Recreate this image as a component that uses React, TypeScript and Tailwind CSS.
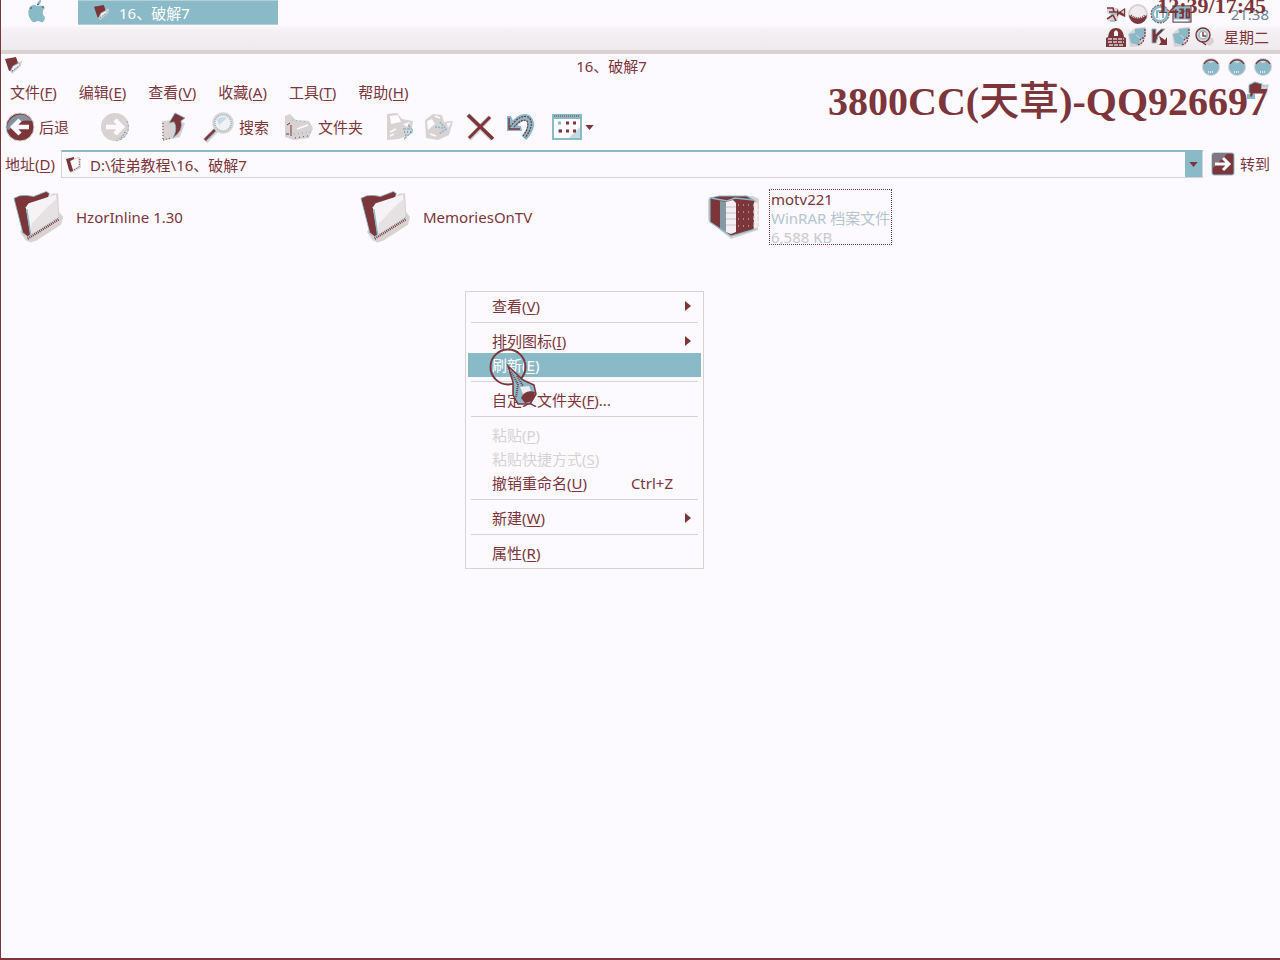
import React from "react";

const INK = "#7b353b";
const TEAL = "#8ab9c8";
const ASH = "#d8d2d2";
const PAPER = "#fcfaff";

function FolderIcon({ size }: { size: string }) {
  return (
    <svg viewBox="0 0 52 54" className={size} aria-hidden="true">
      <path d="M7 42 L13 51 L18 53 L24 51 L49 35 L51 27 L47 22 L46 3 L40 3 Z" fill={ASH} />
      <path d="M1 8 Q7 4 14 5 L21 6 L34 1 L37 3 L36 7 L18 14 L15 18 L19 44 L15 47 L10 43 Z" fill={INK} stroke={TEAL} strokeWidth="0.8" />
      <path d="M13 17 L16 13 L44 4 L46 28 L18 46 Z" fill="#f6f3f6" />
      <path d="M34 18 L45 8 L46 28 L18 46 L19 34 Z" fill="#e6e1e3" />
      <path d="M14 19 L18 45" stroke={TEAL} strokeWidth="1.5" />
      <path d="M15 49 L47 29" stroke={INK} strokeWidth="2.6" strokeDasharray="1 1" />
      <path d="M16 47 L47 27" stroke={TEAL} strokeWidth="1" strokeDasharray="1 1" />
    </svg>
  );
}

function SmallFolder({ size }: { size: string }) {
  return (
    <svg viewBox="0 0 18 18" className={size} aria-hidden="true">
      <path d="M5 14 L7 17 L16 9 L17 4 L13 5 Z" fill={ASH} />
      <path d="M0 2 L11 0 L13 6 L7 13 L4 14 Z" fill={INK} />
      <path d="M6 13 L8 9 L14 6 L15 8 L7 15 Z" fill="#f3eff2" stroke={TEAL} strokeWidth="0.8" />
      <path d="M7 14 L14 9" stroke={INK} strokeWidth="1" strokeDasharray="1 2" />
    </svg>
  );
}

function AddressFolder() {
  return (
    <svg viewBox="0 0 18 18" className="h-[18px] w-[18px]" aria-hidden="true">
      <path d="M4 3 L15 1 L16 12 L6 17 L4 15 Z" fill={ASH} />
      <path d="M6 5 L13 2 L14 10 L7 14 Z" fill={PAPER} />
      <path d="M1 3 L9 1 L9 3 L5 5 L8 14 L6 16 L4 14 Z" fill={INK} />
      <path d="M15 3 L14 11 L7 15" fill="none" stroke={INK} strokeWidth="1" strokeDasharray="1 1.5" />
    </svg>
  );
}

function RarIcon() {
  return (
    <svg viewBox="0 0 54 46" className="h-[46px] w-[54px]" aria-hidden="true">
      <path d="M1 5 L1 26 L24 45 L51 36 L52 5 L46 2 Z" fill={ASH} />
      <path d="M3 4 L12 2 L40 2 L48 7 L48 35 L24 42 L3 28 Z" fill={INK} stroke={TEAL} strokeWidth="1.2" />
      <path d="M13 7 L20 8 L20 40 L13 35 Z" fill={TEAL} opacity="0.75" />
      <path d="M4 4 L20 7 L28 4 L46 6" fill="none" stroke={TEAL} strokeWidth="1.5" />
      <path d="M19 8 L26 6 L29 9 L29 38 L24 40 L19 38 Z" fill="#f3eff2" />
      <path d="M19 13 H29 M19 19 H29 M19 25 H29 M19 31 H29" stroke={ASH} strokeWidth="1.5" />
      <path d="M31 11 H48 M31 18 H48 M31 25 H48 M31 32 H48" stroke={ASH} strokeWidth="1" strokeDasharray="1 4" />
      <path d="M47 8 L51 9 L51 33 L47 35 Z" fill="#f3eff2" stroke={ASH} strokeDasharray="4 2" />
    </svg>
  );
}

function Apple() {
  return (
    <svg viewBox="0 0 20 24" className="h-6 w-5" aria-hidden="true">
      <path d="M10 6 C7 4 3 5 2 9 C0 14 3 20 6 22 C8 23 9 21 11 21 C13 21 14 23 16 22 C17 21 18 19 18 17 C15 15 15 10 18 8 C16 5 13 5 10 6 Z" fill={TEAL} />
      <path d="M10 5 C10 2 12 0 14 0 C14 3 13 5 10 5 Z" fill={TEAL} />
      <path d="M3 8 H5 M15 7 H17 M10 5 L12 4" stroke={INK} strokeWidth="1" />
    </svg>
  );
}

function BackIcon() {
  return (
    <svg viewBox="0 0 30 30" className="h-[30px] w-[30px]" aria-hidden="true">
      <circle cx="15" cy="15" r="14" fill={INK} stroke={ASH} />
      <path d="M2 17 A13.5 13.5 0 0 1 27 9 Q14 6 4 18 Z" fill={TEAL} opacity="0.7" />
      <path d="M24 15 H8 M15 8 L8 15 L15 22" fill="none" stroke={PAPER} strokeWidth="4.5" />
    </svg>
  );
}

function ForwardIcon() {
  return (
    <svg viewBox="0 0 30 30" className="h-[30px] w-[30px]" aria-hidden="true">
      <circle cx="15" cy="15" r="14" fill={ASH} />
      <path d="M27 9 A14 14 0 0 1 15 29" fill="none" stroke={TEAL} strokeWidth="1.2" strokeDasharray="2 2" />
      <path d="M25 20 A13 13 0 0 1 19 27" fill="none" stroke={INK} strokeDasharray="1 2" />
      <path d="M6 15 H22 M15 8 L22 15 L15 22" fill="none" stroke={PAPER} strokeWidth="4.5" />
    </svg>
  );
}

function UpIcon() {
  return (
    <svg viewBox="0 0 26 30" className="h-[30px] w-[26px]" aria-hidden="true">
      <path d="M1 9 L12 8 L24 11 L19 25 L2 29 Z" fill={ASH} />
      <path d="M2 11 V28 M2 28 L10 26" stroke={INK} strokeWidth="1" strokeDasharray="1 2" />
      <path d="M14 1 L24 6 L20 9 Q23 18 12 26 Q17 16 13 10 L8 11 Z" fill={INK} stroke={TEAL} strokeWidth="0.8" />
    </svg>
  );
}

function SearchIcon() {
  return (
    <svg viewBox="0 0 32 32" className="h-8 w-8" aria-hidden="true">
      <path d="M2 30 L14 18" stroke={ASH} strokeWidth="6" />
      <path d="M2 29 L13 18" stroke={INK} strokeWidth="3" />
      <path d="M4 29 L14 19" stroke={TEAL} strokeWidth="1.4" strokeDasharray="1 1" />
      <circle cx="20" cy="12" r="9.5" fill="#f3f1f6" stroke={ASH} strokeWidth="2.5" />
      <circle cx="20" cy="12" r="8" fill="none" stroke={TEAL} strokeWidth="1.5" strokeDasharray="1 1" />
      <path d="M14 9 Q18 4 24 7 L16 14 Z" fill={TEAL} opacity="0.4" />
    </svg>
  );
}

function FoldersIcon() {
  return (
    <svg viewBox="0 0 30 30" className="h-[30px] w-[30px]" aria-hidden="true">
      <path d="M1 4 L6 2 L12 8 L25 9 L29 16 L25 26 L10 28 L1 25 Z" fill={ASH} />
      <path d="M13 17 L24 13" stroke={PAPER} strokeWidth="1.5" />
      <path d="M3 13 L6 11 M7 13 V24 M2 22 H5" fill="none" stroke={INK} strokeWidth="1" />
      <path d="M8 8 L22 10 M10 22 L27 20" stroke={TEAL} strokeWidth="1.2" strokeDasharray="1 3" />
      <path d="M11 26 L24 24" stroke={INK} strokeDasharray="1 3" />
    </svg>
  );
}

function MoveIcon() {
  return (
    <svg viewBox="0 0 30 30" className="h-[30px] w-[30px]" aria-hidden="true">
      <path d="M2 2 L12 1 L17 7 L28 9 L26 22 L14 27 L2 28 Z" fill={ASH} />
      <path d="M5 4 L13 3 L16 10 L6 12 Z M18 12 L25 10 L22 15 Z" fill={PAPER} />
      <path d="M5 20 L11 17 M5 24 L9 22" stroke={PAPER} strokeWidth="1.5" />
      <path d="M18 17 H24 V14 L28 19 L20 26 L21 22" fill="none" stroke={TEAL} strokeWidth="1.5" strokeDasharray="3 1" />
      <path d="M19 20 H27" stroke={INK} strokeWidth="0.8" strokeDasharray="1 2" />
    </svg>
  );
}

function CopyIcon() {
  return (
    <svg viewBox="0 0 30 30" className="h-[30px] w-[30px]" aria-hidden="true">
      <path d="M1 8 L9 2 L18 3 L20 10 L29 9 L25 23 L14 28 L2 26 Z" fill={ASH} />
      <path d="M3 9 L8 7 L11 12 L4 18 Z M23 11 L27 11 L24 16 Z" fill={PAPER} />
      <path d="M11 4 L16 6 M6 22 L12 24" stroke={PAPER} strokeWidth="1.5" />
      <path d="M11 15 L20 16 M16 10 L22 17 L15 22" fill="none" stroke={TEAL} strokeWidth="1.5" strokeDasharray="2 1" />
    </svg>
  );
}

function DeleteIcon() {
  return (
    <svg viewBox="0 0 28 28" className="h-7 w-7" aria-hidden="true">
      <path d="M2 2 L26 26 M24 4 L3 26" stroke={ASH} strokeWidth="5" />
      <path d="M2 2 L27 26" stroke={INK} strokeWidth="3.4" />
      <path d="M24 4 L3 25" stroke={INK} strokeWidth="3" />
    </svg>
  );
}

function UndoIcon() {
  return (
    <svg viewBox="0 0 28 28" className="h-7 w-7" aria-hidden="true">
      <path d="M7 13 Q14 2 22 5 Q29 12 18 25" fill="none" stroke={TEAL} strokeWidth="6.5" />
      <path d="M1 3 L1 18 H16 L15 13 L9 12 L5 3 Z" fill={TEAL} />
      <path d="M3 5 V16 H14" fill="none" stroke={INK} strokeWidth="1.4" />
      <path d="M4 14 Q14 1 22 4 Q30 10 19 25" fill="none" stroke={INK} strokeWidth="1.2" strokeDasharray="2 1" />
      <path d="M8 14 Q16 5 21 8 Q24 14 17 23" fill="none" stroke={INK} strokeWidth="1.2" strokeDasharray="2 1" />
    </svg>
  );
}

function ViewsIcon() {
  return (
    <svg viewBox="0 0 30 26" className="h-[26px] w-[30px]" aria-hidden="true">
      <rect x="1" y="1" width="28" height="24" fill={PAPER} stroke={TEAL} strokeWidth="2" />
      <rect x="1" y="1" width="28" height="4" fill={TEAL} />
      <path d="M2 2 H28" stroke={INK} strokeDasharray="1 1" />
      <path d="M29 12 V25 H16 Z" fill={TEAL} opacity="0.5" />
      <path d="M6 9 H9 M6 17 H9" stroke={TEAL} strokeWidth="3" />
      <path d="M14 9 H17 M21 9 H24 M7 17 H10 M14 17 H17 M21 17 H24" stroke={INK} strokeWidth="3" />
    </svg>
  );
}

function GoIcon() {
  return (
    <svg viewBox="0 0 24 24" className="h-6 w-6" aria-hidden="true">
      <rect x="1" y="1" width="22" height="22" rx="2" fill={INK} stroke={TEAL} />
      <path d="M2 2 H16 L2 16 Z" fill={TEAL} opacity="0.5" />
      <path d="M4 12 H18 M12 6 L18 12 L12 18" fill="none" stroke={PAPER} strokeWidth="3" />
    </svg>
  );
}

function Caret({ right = false }: { right?: boolean }) {
  return right ? (
    <svg viewBox="0 0 6 10" className="h-[10px] w-[6px]" aria-hidden="true">
      <path d="M0 0 L6 5 L0 10 Z" fill={INK} />
    </svg>
  ) : (
    <svg viewBox="0 0 10 6" className="h-[5px] w-[9px]" aria-hidden="true">
      <path d="M0 0 H10 L5 6 Z" fill={INK} />
    </svg>
  );
}

function TrayIcons() {
  return (
    <div className="grid grid-cols-5 gap-[2px]">
      <svg viewBox="0 0 20 20" className="h-5 w-5" aria-hidden="true">
        <path d="M1 4 H12 L14 8 L20 4 V13 L13 11 L11 17 H2 L5 11 L1 9 Z" fill={ASH} />
        <path d="M1 4 H7 L8 8 M3 8 H11 M1 15 L7 11 L10 17" fill="none" stroke={INK} strokeWidth="1.6" />
        <path d="M11 5 L13 8 L19 4 V13 L13 10 L11 13 Z" fill={INK} />
        <path d="M15 8 L18 6 V10 Z" fill={ASH} />
        <path d="M5 10 H11 M4 17 H9" stroke={TEAL} strokeWidth="1.5" />
      </svg>
      <svg viewBox="0 0 20 20" className="h-5 w-5" aria-hidden="true">
        <circle cx="10" cy="10" r="9" fill="#efebee" stroke={ASH} strokeWidth="2" />
        <path d="M1 11 A9 9 0 0 0 19 11 Q10 18 1 11 Z" fill={INK} />
        <path d="M3 11 Q10 17 17 11" fill="none" stroke={INK} strokeWidth="1.5" strokeDasharray="1 1" />
      </svg>
      <svg viewBox="0 0 20 20" className="h-5 w-5" aria-hidden="true">
        <circle cx="10" cy="10" r="9" fill={TEAL} stroke={INK} strokeDasharray="2 1" />
        <circle cx="10" cy="10" r="6" fill={PAPER} />
        <path d="M7 14 V7 H13 V14" fill="none" stroke={TEAL} strokeWidth="2" />
      </svg>
      <svg viewBox="0 0 22 20" className="h-5 w-5" aria-hidden="true">
        <rect x="1" y="1" width="20" height="18" fill={TEAL} stroke={INK} />
        <path d="M4 5 V14 M8 5 H12 V14 H8 M8 9 H12 M16 5 H19 V14 H16 Z" fill="none" stroke={INK} strokeWidth="2" />
        <path d="M2 17 H18" stroke={PAPER} strokeWidth="2" />
      </svg>
      <span />
      <svg viewBox="0 0 20 20" className="h-5 w-5" aria-hidden="true">
        <path d="M2 10 Q3 1 10 1 Q17 1 18 10 L20 11 V20 H0 V11 Z" fill={INK} />
        <path d="M8 5 L10 3 L12 5 V9 H8 Z" fill={PAPER} />
        <path d="M2 12 H18 M2 15 H18 M3 18 H17" stroke={ASH} strokeWidth="1.6" strokeDasharray="4 1" />
      </svg>
      <NetworkIcon />
      <svg viewBox="0 0 20 20" className="h-5 w-5" aria-hidden="true">
        <path d="M2 2 H6 V7 L11 2 H15 L8 9 L6 16 H2 Z" fill={INK} stroke={TEAL} />
        <path d="M9 9 L15 13 L17 10 V18 H9 L11 15 Z" fill={INK} />
      </svg>
      <NetworkIcon />
      <svg viewBox="0 0 20 20" className="h-5 w-5" aria-hidden="true">
        <path d="M12 11 H19 L20 15 L16 19 L10 16 Z" fill={ASH} />
        <circle cx="9" cy="8" r="7" fill={ASH} stroke={INK} strokeWidth="1.4" />
        <circle cx="9" cy="8" r="4" fill={PAPER} stroke={TEAL} strokeWidth="1.5" />
        <path d="M9 5 V9 H12 M8 15 L12 18" fill="none" stroke={INK} strokeWidth="1.4" />
      </svg>
    </div>
  );
}

function NetworkIcon() {
  return (
    <svg viewBox="0 0 20 20" className="h-5 w-5" aria-hidden="true">
      <path d="M7 1 L18 0 V9 L13 19 L2 20 L0 7 Z" fill={ASH} />
      <path d="M7 2 L17 1 V8 L12 13 L11 18 L3 16 L1 7 L7 6 Z" fill={TEAL} />
      <path d="M8 8 L12 11" stroke={ASH} />
      <path d="M17 2 V9 L12 13 M10 18 L15 15 L16 11" fill="none" stroke={INK} strokeWidth="1.2" strokeDasharray="2 1" />
    </svg>
  );
}

function WindowDot({ label }: { label: string }) {
  return (
    <button aria-label={label} className="h-[19px] w-[18px]">
      <svg viewBox="0 0 18 19" className="h-[19px] w-[18px]" aria-hidden="true">
        <circle cx="9" cy="10" r="8.5" fill={TEAL} stroke={ASH} />
        <path d="M2 7 A8 8 0 0 1 16 7" fill="none" stroke={INK} strokeWidth="1.3" />
        <path d="M6 4 H12 L10 6 H8 Z" fill={ASH} />
        <path d="M6 15 H12" stroke={PAPER} strokeWidth="1.5" strokeDasharray="1 1" />
      </svg>
    </button>
  );
}

function Label({ text, hot, tail = "" }: { text: string; hot: string; tail?: string }) {
  return (
    <span className="whitespace-nowrap">
      {text}(<span className="underline underline-offset-2">{hot}</span>){tail}
    </span>
  );
}

const menus = [
  ["文件", "F"],
  ["编辑", "E"],
  ["查看", "V"],
  ["收藏", "A"],
  ["工具", "T"],
  ["帮助", "H"],
];

type Item = { text: string; hot: string; tail?: string; key?: string; sub?: boolean; state?: "active" | "disabled" };

const groups: Item[][] = [
  [{ text: "查看", hot: "V", sub: true }],
  [
    { text: "排列图标", hot: "I", sub: true },
    { text: "刷新", hot: "E", state: "active" },
  ],
  [{ text: "自定义文件夹", hot: "F", tail: "..." }],
  [
    { text: "粘贴", hot: "P", state: "disabled" },
    { text: "粘贴快捷方式", hot: "S", state: "disabled" },
    { text: "撤销重命名", hot: "U", key: "Ctrl+Z" },
  ],
  [{ text: "新建", hot: "W", sub: true }],
  [{ text: "属性", hot: "R" }],
];

const itemTone = {
  active: "bg-[#8ab9c8] text-white",
  disabled: "text-[#d8d2d2]",
  normal: "text-[#7b353b]",
};

function ContextMenu() {
  return (
    <div role="menu" className="absolute left-[464px] top-[291px] w-[239px] border border-[#d8d2d2] bg-[#fcfaff] px-[2px] pb-[3px] pt-[2px]">
      {groups.map((group, g) => (
        <div key={g}>
          {g > 0 && <div role="separator" className="mx-[3px] mb-[6px] mt-[4px] h-px bg-[#d8d2d2]" />}
          {group.map((item) => (
            <button
              key={item.text}
              role="menuitem"
              disabled={item.state === "disabled"}
              className={`flex h-6 w-full items-center pl-6 pr-[10px] text-left ${itemTone[item.state ?? "normal"]}`}
            >
              <Label text={item.text} hot={item.hot} tail={item.tail} />
              {item.key && <span className="ml-auto pr-[18px]">{item.key}</span>}
              {item.sub && (
                <span className="ml-auto">
                  <Caret right />
                </span>
              )}
            </button>
          ))}
        </div>
      ))}
    </div>
  );
}

function Pointer() {
  return (
    <svg viewBox="0 0 50 60" className="pointer-events-none absolute left-[488px] top-[348px] h-[60px] w-[50px]" aria-hidden="true">
      <circle cx="19" cy="19" r="17.5" fill="none" stroke={INK} strokeWidth="2" />
      <path d="M19 18 L34 32 L45 37 L47 46 L41 56 L29 56 L24 47 L24 34 Z" fill={TEAL} stroke={INK} strokeWidth="1.5" />
      <path d="M22 24 L29 36 L27 50 M28 28 L34 38" fill="none" stroke={INK} strokeWidth="2" strokeDasharray="1 1" />
      <path d="M31 39 L40 38 L42 43 L34 46 Z" fill="#efebee" />
      <path d="M32 50 Q36 41 46 44 Q45 55 36 55 Z" fill={INK} />
    </svg>
  );
}

export default function App() {
  return (
    <div className="relative flex min-h-screen flex-col overflow-hidden border-b-2 border-l border-[#7b353b] bg-[#fcfaff] font-['Noto_Sans','Noto_Sans_CJK_SC',sans-serif] text-[15px] leading-5 text-[#7b353b]">
      <header className="flex h-[54px] items-start justify-between border-b-4 border-[#d8d2d2] bg-[linear-gradient(#fcfaff_50%,#f4f0f3_60%,#eeeaed)]">
        <div className="flex">
          <button aria-label="Apple" className="flex w-[77px] pl-[26px]">
            <Apple />
          </button>
          <button className="flex h-[25px] w-[200px] items-center gap-[9px] border-y border-[#b5cfd9] bg-[#8ab9c8] pl-4 text-white">
            <SmallFolder size="h-4 w-4" />
            16、破解7
          </button>
        </div>
        <div className="flex gap-[10px] pr-[11px] pt-1">
          <TrayIcons />
          <div className="flex flex-col text-right">
            <span className="text-[#6f7f8c]">21:38</span>
            <span className="mt-[3px]">星期二</span>
          </div>
        </div>
      </header>
      <div className="absolute -top-[6px] right-[14px] font-['Liberation_Serif',serif] text-[22px] font-bold leading-6">12:39/17:45</div>

      <main className="flex grow flex-col">
        <div className="flex items-center pt-[2px]">
          <span className="w-5 pl-1">
            <SmallFolder size="h-[18px] w-[18px]" />
          </span>
          <h1 className="grow text-center">16、破解7</h1>
          <div className="flex justify-end gap-2 pr-2">
            <WindowDot label="最小化" />
            <WindowDot label="最大化" />
            <WindowDot label="关闭" />
          </div>
        </div>

        <nav className="flex gap-[22px] pl-[9px] pt-[6px]">
          {menus.map(([text, hot]) => (
            <button key={text}>
              <Label text={text} hot={hot} />
            </button>
          ))}
        </nav>

        <div className="mt-px flex h-12 items-center pl-1">
          <button className="flex items-center gap-1">
            <BackIcon />
            后退
          </button>
          <button aria-label="前进" className="ml-[31px]">
            <ForwardIcon />
          </button>
          <button aria-label="向上" className="ml-[31px]">
            <UpIcon />
          </button>
          <button className="ml-4 flex items-center gap-1">
            <SearchIcon />
            搜索
          </button>
          <button className="ml-[15px] flex items-center gap-1">
            <FoldersIcon />
            文件夹
          </button>
          <button aria-label="移至" className="ml-[22px]">
            <MoveIcon />
          </button>
          <button aria-label="复制到" className="ml-[9px]">
            <CopyIcon />
          </button>
          <button aria-label="删除" className="ml-3">
            <DeleteIcon />
          </button>
          <button aria-label="撤销" className="ml-3">
            <UndoIcon />
          </button>
          <button aria-label="查看方式" className="ml-[18px] flex items-center gap-[3px]">
            <ViewsIcon />
            <Caret />
          </button>
        </div>

        <form className="-mt-[1px] flex h-7 items-center pl-1 pr-[10px]" onSubmit={(e) => e.preventDefault()}>
          <label htmlFor="address" className="w-14">
            <Label text="地址" hot="D" />
          </label>
          <div className="flex h-7 grow items-center border border-t-2 border-[#d8d2d2] border-t-[#8ab9c8] pl-[3px]">
            <AddressFolder />
            <input id="address" defaultValue="D:\徒弟教程\16、破解7" className="grow bg-transparent pl-[7px] outline-none" />
            <button type="button" aria-label="展开" className="flex h-full w-[17px] items-center justify-center bg-[#8ab9c8]">
              <Caret />
            </button>
          </div>
          <button className="ml-2 flex items-center gap-[5px]">
            <GoIcon />
            转到
          </button>
        </form>

        <div className="grid grid-cols-[347px_347px_1fr] pl-3 pt-[11px]">
          <div className="flex items-center gap-3">
            <FolderIcon size="h-[54px] w-[51px]" />
            HzorInline 1.30
          </div>
          <div className="flex items-center gap-3">
            <FolderIcon size="h-[54px] w-[51px]" />
            MemoriesOnTV
          </div>
          <div className="flex items-center gap-2">
            <RarIcon />
            <div className="flex h-14 w-[123px] flex-col whitespace-nowrap border border-dotted border-[#7b353b] pl-px leading-[19px]">
              <span>motv221</span>
              <span className="text-[#b4c5cf]">WinRAR 档案文件</span>
              <span className="text-[#ccc8cc]">6,588 KB</span>
            </div>
          </div>
        </div>
      </main>

      <svg viewBox="0 0 26 24" className="pointer-events-none absolute right-[9px] top-[80px] h-6 w-[26px]" aria-hidden="true">
        <path d="M4 4 L10 1 L16 5 L24 4 L22 14 L18 21 L16 12 Z" fill={ASH} />
        <path d="M4 5 L10 2 L17 4 L16 11 L4 13 Z" fill={INK} stroke={TEAL} />
        <path d="M2 14 H10 V19 H2 Z" fill={TEAL} />
        <path d="M18 6 L22 6 L20 14" fill="none" stroke={TEAL} strokeDasharray="2 1" />
      </svg>
      <div className="pointer-events-none absolute right-[12px] top-[78px] whitespace-nowrap font-['Liberation_Serif','Noto_Sans_CJK_SC',serif] text-[40px] font-bold leading-[48px]">
        3800CC(<span className="font-medium">天草</span>)-QQ926697
      </div>

      <ContextMenu />
      <Pointer />
    </div>
  );
}
